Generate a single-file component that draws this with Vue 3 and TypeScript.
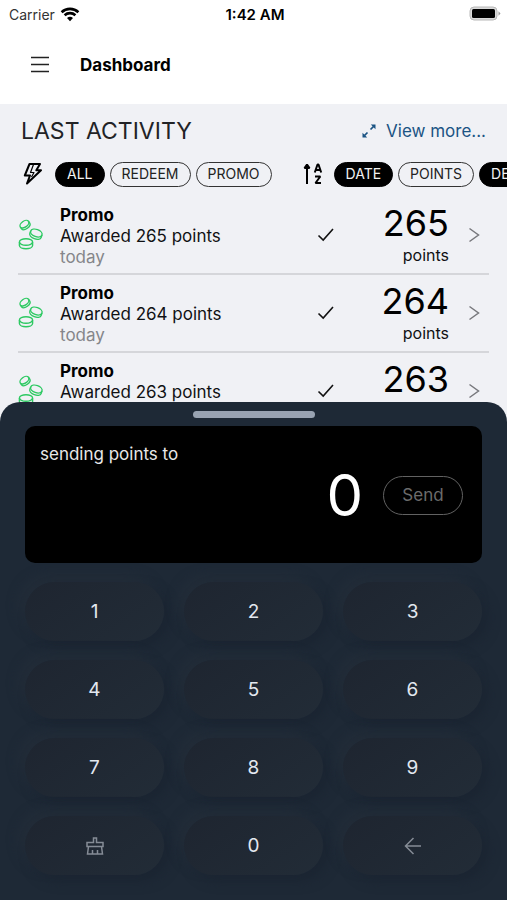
<script setup lang="ts">
import { computed, ref } from 'vue'

interface Activity {
  id: number
  kind: string
  points: number
  when: string
}

const activities: Activity[] = [
  { id: 1, kind: 'Promo', points: 265, when: 'today' },
  { id: 2, kind: 'Promo', points: 264, when: 'today' },
  { id: 3, kind: 'Promo', points: 263, when: 'today' },
]

const filters = ['ALL', 'REDEEM', 'PROMO']
const sorts = ['DATE', 'POINTS']
const activeFilter = ref('ALL')
const activeSort = ref('DATE')
const descending = ref(true)

const digits = ['1', '2', '3', '4', '5', '6', '7', '8', '9']
const amount = ref('0')
const canSend = computed(() => Number(amount.value) > 0)

function press(digit: string) {
  amount.value = amount.value === '0' ? digit : (amount.value + digit).slice(0, 6)
}
function clear() {
  amount.value = '0'
}
function back() {
  amount.value = amount.value.slice(0, -1) || '0'
}
</script>

<template>
  <div class="screen">
    <div class="status">
      <div class="carrier">
        <span>Carrier</span>
        <svg class="wifi" viewBox="0 0 20 15" aria-hidden="true">
          <path d="M1.6 5.2a12.2 12.2 0 0 1 16.8 0" />
          <path d="M4.6 8.3a7.9 7.9 0 0 1 10.8 0" />
          <path class="dot" d="M10 14.2l-3-3.1a4.3 4.3 0 0 1 6 0z" />
        </svg>
      </div>
      <span class="clock">1:42 AM</span>
      <svg class="battery" viewBox="0 0 32 16" aria-hidden="true">
        <rect class="shell" x="1" y="1" width="27" height="13" rx="4" />
        <path class="cap" d="M29.500 5.200l2 2.300-2 2.300z" />
        <rect x="3" y="3" width="23" height="9" rx="1.500" />
      </svg>
    </div>

    <header class="nav">
      <button class="menu" type="button" aria-label="Menu">
        <svg viewBox="0 0 20 20"><path d="M1 2.500h18M1 9.500h18M1 16.500h18" /></svg>
      </button>
      <h1>Dashboard</h1>
    </header>

    <main class="content">
      <div class="heading">
        <h2>LAST ACTIVITY</h2>
        <a class="more" href="#activity">
          <svg viewBox="0 0 16 16" aria-hidden="true">
            <path class="line" d="M9.500 6.500l3-3M6.500 9.500l-3 3" />
            <path class="tip" d="M9.800 1.500h4.700v4.700zM6.200 14.500H1.500V9.800z" />
          </svg>
          <span>View more...</span>
        </a>
      </div>

      <div class="filters">
        <svg class="bolt" viewBox="0 0 22 24" aria-hidden="true">
          <path d="M7.500 2h10.500l-3.700 6.300H19L5 21.500l3-8H2.800z" />
          <path class="inner" d="M11.500 2.500L8.500 10.500h3.500L9.500 15" />
        </svg>
        <div class="pills">
          <button
            v-for="name in filters"
            :key="name"
            type="button"
            class="pill"
            :class="{ on: name === activeFilter }"
            @click="activeFilter = name"
          >{{ name }}</button>
        </div>
        <svg class="sort" viewBox="0 0 20 24" aria-hidden="true">
          <path d="M4 22V4M1.500 6L4 2.500 6.500 6z" />
          <path d="M11.800 10.500l2.700-8h1l2.700 8M13 8h4M12 14.500h5.300l-4.800 6.500H18" />
        </svg>
        <div class="pills">
          <button
            v-for="name in sorts"
            :key="name"
            type="button"
            class="pill"
            :class="{ on: name === activeSort }"
            @click="activeSort = name"
          >{{ name }}</button>
          <button
            type="button"
            class="pill"
            :class="{ on: descending }"
            @click="descending = !descending"
          >DESC</button>
        </div>
      </div>

      <ul id="activity" class="list">
        <li v-for="item in activities" :key="item.id" class="row">
          <svg class="coins" viewBox="0 0 26 32" aria-hidden="true">
            <g transform="rotate(-36 7 6)">
              <ellipse cx="7" cy="5" rx="5" ry="3" />
              <path d="M2 5v2c0 1.700 2.200 3 5 3s5-1.300 5-3V5" />
            </g>
            <g transform="rotate(20 18 15)">
              <ellipse cx="18" cy="14" rx="6" ry="3.600" />
              <path d="M12 14v2.500c0 2 2.700 3.500 6 3.500s6-1.500 6-3.500V14" />
            </g>
            <ellipse cx="8" cy="23" rx="6.600" ry="3.200" />
            <path d="M1.400 23v3.500c0 1.800 3 3.200 6.600 3.200s6.600-1.400 6.600-3.200V23" />
          </svg>
          <div class="info">
            <strong>{{ item.kind }}</strong>
            <span>Awarded {{ item.points }} points</span>
            <span class="when">{{ item.when }}</span>
          </div>
          <svg class="check" viewBox="0 0 18 16" aria-hidden="true"><path d="M1.500 8.500l4.700 4.500L16 2" /></svg>
          <div class="total">
            <span class="number">{{ item.points }}</span>
            <span>points</span>
          </div>
          <svg class="chevron" viewBox="0 0 12 16" aria-hidden="true"><path d="M1.500 1.500l9 6.500-9 6.500" /></svg>
        </li>
      </ul>
    </main>

    <section class="sheet" aria-label="Send points">
      <div class="handle"></div>
      <div class="display">
        <p>sending points to</p>
        <div class="entry">
          <output class="amount">{{ amount }}</output>
          <button class="send" type="button" :disabled="!canSend">Send</button>
        </div>
      </div>
      <div class="keys">
        <button v-for="d in digits" :key="d" class="key" type="button" @click="press(d)">{{ d }}</button>
        <button class="key" type="button" aria-label="Clear" @click="clear">
          <svg viewBox="0 0 20 20" aria-hidden="true">
            <path d="M8.500 6.500V2h3v4.500H18v4H2v-4zM3.500 10.500L2.500 18h15l-1-7.500M7.500 18v-4M12.500 18v-4" />
          </svg>
        </button>
        <button class="key" type="button" @click="press('0')">0</button>
        <button class="key" type="button" aria-label="Backspace" @click="back">
          <svg viewBox="0 0 20 20" aria-hidden="true"><path d="M18 10H2.500M10.500 2L2.500 10l8 8" /></svg>
        </button>
      </div>
    </section>
  </div>
</template>

<style>
body {
  margin: 0;
}
</style>

<style scoped>
.screen {
  position: relative;
  display: flex;
  flex-direction: column;
  height: 100vh;
  overflow: hidden;
  background: #f0f1f5;
  color: #101114;
  font-family: Inter, 'Liberation Sans', sans-serif;
  font-size: 17px;
  line-height: 21px;
}
svg {
  display: block;
  flex: none;
  fill: none;
  stroke: currentColor;
}
button {
  padding: 0;
  border: 0;
  background: none;
  color: inherit;
  font: inherit;
}
h1,
h2,
p,
ul {
  margin: 0;
  padding: 0;
}
.status {
  display: grid;
  grid-template-columns: 1fr auto 1fr;
  align-items: center;
  box-sizing: border-box;
  height: 28px;
  padding: 0 6px 0 9px;
  background: #fff;
  font-size: 14px;
}
.carrier {
  display: flex;
  align-items: center;
  gap: 5px;
  color: #333;
}
.wifi {
  width: 20px;
  height: 15px;
  color: #000;
  stroke-width: 2.600;
}
.wifi .dot {
  fill: currentColor;
  stroke: none;
}
.clock {
  color: #000;
  font-size: 15px;
  font-weight: 600;
}
.battery {
  justify-self: end;
  width: 32px;
  height: 16px;
  fill: #000;
  stroke: none;
}
.battery .shell {
  fill: #dadada;
  stroke: #b8b8b8;
}
.battery .cap {
  fill: #999;
}
.nav {
  display: flex;
  align-items: center;
  gap: 30px;
  height: 76px;
  padding: 0 30px 2px;
  box-sizing: border-box;
  background: #fff;
}
.menu svg {
  width: 20px;
  height: 20px;
  color: #222;
  stroke-width: 1.700;
}
h1 {
  color: #000;
  font-size: 17px;
  font-weight: 700;
}
.content {
  flex: 1;
  min-height: 0;
}
.heading {
  display: flex;
  align-items: center;
  justify-content: space-between;
  height: 54px;
  padding: 0 21px;
}
h2 {
  color: #222326;
  font-size: 23px;
  font-weight: 400;
  line-height: 30px;
}
.more {
  display: flex;
  align-items: center;
  gap: 9px;
  color: #1b5484;
  text-decoration: none;
}
.more svg {
  width: 16px;
  height: 16px;
}
.more .line {
  stroke-width: 1.700;
}
.more .tip {
  fill: currentColor;
  stroke: none;
}
.filters {
  display: flex;
  align-items: center;
  height: 32px;
  padding-left: 22px;
  overflow-x: auto;
  scrollbar-width: none;
}
.bolt {
  width: 22px;
  height: 24px;
  margin-right: 11px;
  color: #000;
  stroke-width: 2;
  stroke-linejoin: round;
}
.bolt .inner {
  stroke-width: 1.200;
}
.pills {
  display: flex;
  flex: none;
  gap: 5px;
}
.pill {
  box-sizing: border-box;
  height: 25px;
  padding: 0 11px;
  border: 1px solid #333;
  border-radius: 13px;
  color: #222;
  font-size: 14px;
  line-height: 22px;
}
.pill.on {
  border-color: #000;
  background: #000;
  color: #f2f2f2;
}
.sort {
  width: 20px;
  height: 24px;
  margin: 0 11px 0 31px;
  color: #000;
  stroke-width: 2;
  stroke-linejoin: bevel;
}
.list {
  padding: 7px 18px 0;
  list-style: none;
}
.row {
  display: flex;
  align-items: center;
  box-sizing: border-box;
  height: 78px;
  padding-right: 9px;
  border-bottom: 2px solid #d5d6da;
}
.coins {
  width: 26px;
  height: 32px;
  margin-right: 16px;
  color: #2dc962;
  stroke-width: 1.400;
}
.info {
  display: flex;
  flex: 1;
  flex-direction: column;
  padding-top: 3px;
}
.info strong {
  color: #000;
  font-weight: 700;
}
.when {
  color: #85868a;
}
.check {
  width: 18px;
  height: 16px;
  color: #111;
  stroke-width: 1.600;
}
.total {
  display: flex;
  flex-direction: column;
  width: 114px;
  padding-bottom: 2px;
  text-align: right;
}
.number {
  color: #000;
  font-size: 36px;
  line-height: 43px;
}
.total .number + span {
  font-size: 16px;
}
.chevron {
  width: 12px;
  height: 16px;
  margin-left: 19px;
  color: #77787c;
  stroke-width: 1.500;
}
.sheet {
  position: absolute;
  right: 0;
  bottom: 0;
  left: 0;
  display: flex;
  flex-direction: column;
  padding: 9px 25px 25px;
  border-radius: 20px 20px 0 0;
  background: #1e2936;
}
.handle {
  align-self: center;
  width: 122px;
  height: 7px;
  margin-bottom: 8px;
  border-radius: 4px;
  background: #98a2b1;
}
.display {
  box-sizing: border-box;
  min-height: 137px;
  margin-bottom: 19px;
  padding: 18px 19px 18px 15px;
  border-radius: 10px;
  background: #000;
  color: #e8e8e8;
}
.entry {
  display: flex;
  align-items: center;
  justify-content: flex-end;
  gap: 20px;
}
.amount {
  color: #fff;
  font-size: 58px;
  line-height: 60px;
}
.send {
  box-sizing: border-box;
  width: 80px;
  height: 39px;
  border: 1px solid #626262;
  border-radius: 20px;
}
.send:disabled {
  color: #6c6c6c;
}
.keys {
  display: grid;
  grid-template-columns: repeat(3, 1fr);
  gap: 19px 20px;
}
.key {
  display: flex;
  align-items: center;
  justify-content: center;
  height: 59px;
  border-radius: 30px;
  background: linear-gradient(145deg, #1e2530, #222c37);
  box-shadow: 6px 6px 12px #1b2532, -6px -6px 12px #232d39;
  color: #e3e8f0;
  font-size: 19px;
  line-height: 22px;
}
.key svg {
  width: 20px;
  height: 20px;
  color: #858c96;
  stroke-width: 1.500;
}
</style>
